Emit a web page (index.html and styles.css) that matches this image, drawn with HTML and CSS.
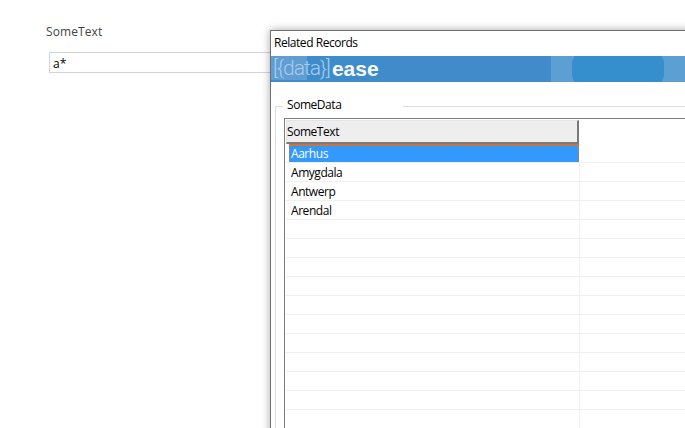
FILE: index.html
```html
<!DOCTYPE html>
<html lang="en">
<head>
<meta charset="utf-8">
<title>Related Records</title>
<link rel="stylesheet" href="styles.css">
</head>
<body>
<main class="page">
  <label class="field-label">SomeText</label>
  <div class="field-input">a*</div>
</main>
<section class="dialog">
  <header class="title">Related Records</header>
  <div class="banner">
    <span class="logo-patch"></span>
    <span class="logo-patch-light"></span>
    <span class="deco-band"><span class="deco-pill"></span></span>
    <span class="logo"><span class="logo-thin">[{data}]</span><span class="logo-bold">ease</span></span>
  </div>
  <div class="group">
    <div class="legend">SomeData</div>
    <div class="grid">
      <div class="row head"><div class="cell col-a head-cell">SomeText</div></div>
      <div class="row selected"><div class="cell col-a"><span class="sel">Aarhus</span></div><div class="cell col-b"></div></div>
      <div class="row"><div class="cell col-a">Amygdala</div><div class="cell col-b"></div></div>
      <div class="row"><div class="cell col-a">Antwerp</div><div class="cell col-b"></div></div>
      <div class="row"><div class="cell col-a">Arendal</div><div class="cell col-b"></div></div>
      <div class="row"><div class="cell col-a"></div><div class="cell col-b"></div></div>
      <div class="row"><div class="cell col-a"></div><div class="cell col-b"></div></div>
      <div class="row"><div class="cell col-a"></div><div class="cell col-b"></div></div>
      <div class="row"><div class="cell col-a"></div><div class="cell col-b"></div></div>
      <div class="row"><div class="cell col-a"></div><div class="cell col-b"></div></div>
      <div class="row"><div class="cell col-a"></div><div class="cell col-b"></div></div>
      <div class="row"><div class="cell col-a"></div><div class="cell col-b"></div></div>
      <div class="row"><div class="cell col-a"></div><div class="cell col-b"></div></div>
      <div class="row"><div class="cell col-a"></div><div class="cell col-b"></div></div>
      <div class="row"><div class="cell col-a"></div><div class="cell col-b"></div></div>
      <div class="row"><div class="cell col-a"></div><div class="cell col-b"></div></div>
      <div class="row"><div class="cell col-a"></div><div class="cell col-b"></div></div>
    </div>
  </div>
</section>
</body>
</html>
```
FILE: styles.css
```css
html, body {
  margin: 0;
  width: 685px;
  height: 428px;
  overflow: hidden;
  background: #fff;
  font-family: "Open Sans", "Noto Sans", sans-serif;
  font-size: 12px;
  color: #000;
}
body {
  position: relative;
}
.page {
  padding: 23px 0 0 46px;
}
.field-label {
  display: block;
  height: 18px;
  line-height: 18px;
  color: #444;
  letter-spacing: 0.1px;
}
.field-input {
  box-sizing: border-box;
  margin: 11px 0 0 3px;
  width: 300px;
  height: 21px;
  padding-left: 3px;
  border: 1px solid #cfd3e2;
  line-height: 21px;
}
.dialog {
  position: absolute;
  left: 270px;
  top: 30px;
  width: 500px;
  height: 500px;
  background: #fff;
  border: 1px solid #6f6f6f;
  box-shadow: 0 0 8px rgba(0,0,0,.35);
  letter-spacing: -0.45px;
}
.title {
  height: 25px;
  padding: 3px 0 0 3px;
  box-sizing: border-box;
  line-height: 18px;
}
.banner {
  position: relative;
  height: 26px;
  background: #418bca;
  overflow: hidden;
  display: flex;
}
.logo-patch {
  position: absolute;
  left: 0;
  top: 0;
  width: 114px;
  height: 24px;
  background: #3f8ccb;
}
.logo-patch-light {
  position: absolute;
  left: 0;
  top: 0;
  width: 36px;
  height: 24px;
  background: #5f9dd2;
}
.deco-band {
  position: absolute;
  left: 280px;
  top: 0;
  width: 200px;
  height: 26px;
  background: #5c9fd3;
}
.deco-pill {
  position: absolute;
  left: 21px;
  top: -6px;
  width: 92px;
  height: 38px;
  border-radius: 14px;
  background: #358fcc;
}
.logo {
  position: relative;
  margin-left: 2px;
  line-height: 25px;
  font-family: "Liberation Sans", sans-serif;
  font-size: 21px;
  white-space: nowrap;
  display: flex;
  letter-spacing: 0;
}
.logo-thin {
  font-family: Roboto, sans-serif;
  font-weight: 300;
  color: #a8cdec;
  letter-spacing: -1px;
}
.logo-bold {
  margin-left: 2px;
  font-weight: 700;
  color: #f7fafd;
}
.group {
  position: relative;
  margin: 24px 0 0 4px;
  height: 400px;
  border: 1px solid #dcdcdc;
  padding: 11px 0 0 8px;
}
.legend {
  position: absolute;
  left: 7px;
  top: -11px;
  padding: 0 4px;
  width: 120px;
  box-sizing: border-box;
  background: #fff;
  height: 18px;
  line-height: 18px;
}
.grid {
  width: 500px;
  border: 1px solid #7a7f85;
  padding-top: 1px;
}
.row {
  display: flex;
  height: 19px;
}
.cell {
  box-sizing: border-box;
  border-bottom: 1px solid #f0f0f0;
  line-height: 19px;
}
.col-a {
  width: 295px;
  padding-left: 6px;
  border-right: 1px solid #f0f0f0;
}
.col-b {
  flex: 1;
}
.head {
  height: 24px;
}
.head-cell {
  box-sizing: border-box;
  height: 24px;
  margin-left: 1px;
  width: 293px;
  padding-left: 0;
  line-height: 22px;
  background: #eeeeee;
  border: 1px solid #e4e4e4;
  border-right: 2px solid #7a7a7a;
  border-bottom: 2px solid #7a7a7a;
}
.selected .col-a {
  padding: 0 0 0 4px;
  border-right: 0;
}
.selected .col-a .sel {
  display: block;
  width: 290px;
  height: 18px;
  padding: 2px 0 0 1px;
  box-sizing: border-box;
  background:
    repeating-linear-gradient(90deg, #d9722a 0 2px, #a87a5c 2px 3px) top / 100% 2px no-repeat,
    #3399ff;
  color: #fff;
  line-height: 16px;
  border-right: 1px dotted #d9722a;
  border-left: 1px dotted #d9722a;
}
```
